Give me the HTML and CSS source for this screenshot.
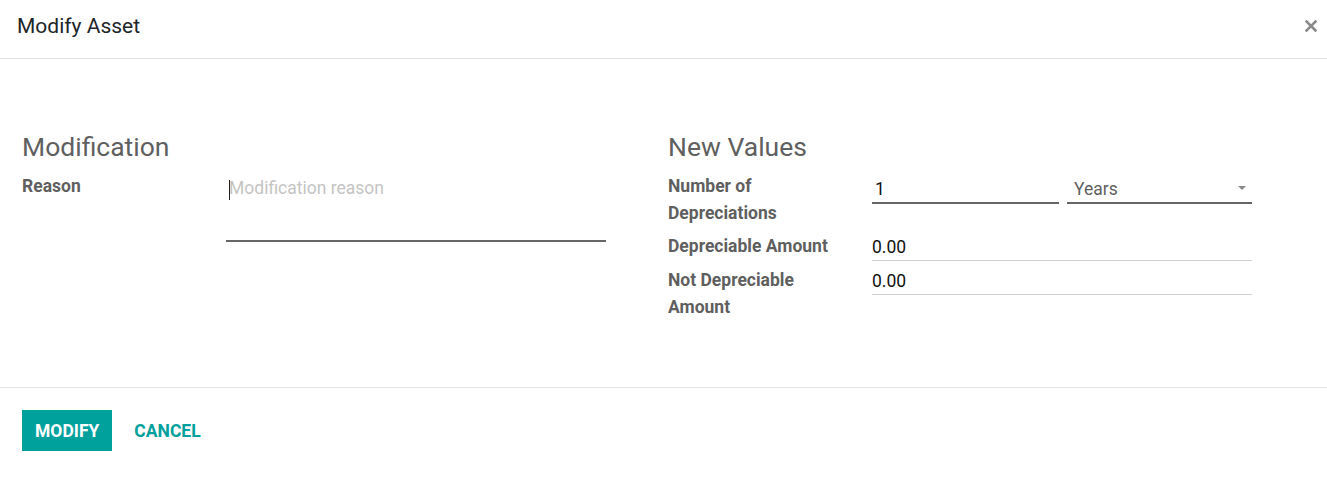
FILE: index.html
```html
<!DOCTYPE html>
<html lang="en">
<head>
  <meta charset="UTF-8" />
  <title>Modify Asset</title>
  <link rel="stylesheet" href="styles.css">
</head>
<body>

<div class="modal">
  <!-- Header -->
  <div class="modal-header">
    <h4 class="modal-title">Modify Asset</h4>
    <button class="close-btn" aria-label="Close">
      <svg width="12" height="12" viewBox="0 0 12 12">
        <path d="M1.5 1.5 L10.5 10.5 M10.5 1.5 L1.5 10.5" stroke="#8a8a8a" stroke-width="2.6" stroke-linecap="square"/>
      </svg>
    </button>
  </div>

  <!-- Body -->
  <div class="modal-body">
    <div class="group">
      <h3 class="group-title">Modification</h3>
      <div class="form-grid">
        <label class="field-label">Reason</label>
        <div class="field">
          <span class="caret-line"></span>
          <textarea class="reason" placeholder="Modification reason"></textarea>
        </div>
      </div>
    </div>

    <div class="group">
      <h3 class="group-title">New Values</h3>
      <div class="form-grid">
        <label class="field-label">Number of Depreciations</label>
        <div class="field split">
          <input class="input strong" type="text" value="1">
          <div class="select">
            <span>Years</span>
            <span class="arrow"></span>
          </div>
        </div>

        <label class="field-label">Depreciable Amount</label>
        <div class="field">
          <input class="input" type="text" value="0.00">
        </div>

        <label class="field-label">Not Depreciable Amount</label>
        <div class="field">
          <input class="input" type="text" value="0.00">
        </div>
      </div>
    </div>
  </div>

  <!-- Footer -->
  <div class="modal-footer">
    <button class="btn btn-primary">MODIFY</button>
    <button class="btn btn-link">CANCEL</button>
  </div>
</div>

</body>
</html>
```

FILE: styles.css
```css
body {
  margin: 0;
  font-family: 'Roboto', 'Liberation Sans', sans-serif;
  background-color: #fff;
  color: #212529;
}

.modal {
  width: 1327px;
}

.modal-header {
  display: flex;
  align-items: center;
  justify-content: space-between;
  height: 59px;
  padding: 0 10px 6px 17px;
  box-sizing: border-box;
  border-bottom: 1px solid #e2e2e2;
}

.modal-title {
  margin: 0;
  font-size: 21px;
  font-weight: 400;
  color: #212529;
}

.close-btn {
  background: none;
  border: none;
  padding: 0;
  cursor: pointer;
  line-height: 0;
}

/* Body */
.modal-body {
  display: flex;
  gap: 62px;
  padding: 72px 22px 66px;
}

.group {
  width: 584px;
}

.group-title {
  margin: 0 0 11px;
  font-size: 26.5px;
  font-weight: 400;
  line-height: 31px;
  color: #5f5f5f;
}

.form-grid {
  display: grid;
  grid-template-columns: 204px 1fr;
  row-gap: 6px;
  align-items: start;
}

.field-label {
  font-size: 17.5px;
  font-weight: 700;
  line-height: 27px;
  color: #5f5f5f;
  padding-right: 40px;
}

.field {
  position: relative;
}

.field.split {
  display: flex;
  gap: 8px;
}

.reason {
  display: block;
  width: 100%;
  height: 67px;
  box-sizing: border-box;
  margin: 2px 0 0;
  padding: 0 3px;
  border: none;
  border-bottom: 2px solid #666;
  font-family: inherit;
  font-size: 17.5px;
  line-height: 27px;
  color: #212529;
  resize: none;
  outline: none;
}

.reason::placeholder {
  color: #c4c4c4;
}

.caret-line {
  position: absolute;
  left: 3px;
  top: 7px;
  width: 1px;
  height: 20px;
  background: #222;
}

.input {
  display: block;
  width: 100%;
  box-sizing: border-box;
  margin: 0;
  padding: 0;
  border: none;
  border-bottom: 1px solid #cfcfcf;
  font-family: inherit;
  font-size: 17.5px;
  line-height: 27px;
  height: 28px;
  color: #111;
  outline: none;
}

.input.strong {
  width: 187px;
  margin-top: 2px;
  padding-left: 3px;
  border-bottom: 2px solid #666;
  height: 29px;
}

.select {
  flex: 1;
  display: flex;
  justify-content: space-between;
  align-items: center;
  margin-top: 2px;
  height: 29px;
  box-sizing: border-box;
  padding: 0 6px 0 7px;
  border-bottom: 2px solid #666;
  font-size: 17.5px;
  color: #5f5f5f;
}

.arrow {
  width: 0;
  height: 0;
  border-left: 4px solid transparent;
  border-right: 4px solid transparent;
  border-top: 4px solid #8a8a8a;
  margin-bottom: 2px;
}

/* Footer */
.modal-footer {
  display: flex;
  align-items: center;
  gap: 4px;
  padding: 22px 22px 26px;
  border-top: 1px solid #e2e2e2;
}

.btn {
  font-family: inherit;
  font-size: 17.5px;
  font-weight: 700;
  height: 41px;
  padding: 0 13px;
  border: none;
  cursor: pointer;
}

.btn-primary {
  background-color: #00a09d;
  color: #fff;
}

.btn-link {
  background: none;
  color: #00a09d;
  padding: 0 18px;
}
```
